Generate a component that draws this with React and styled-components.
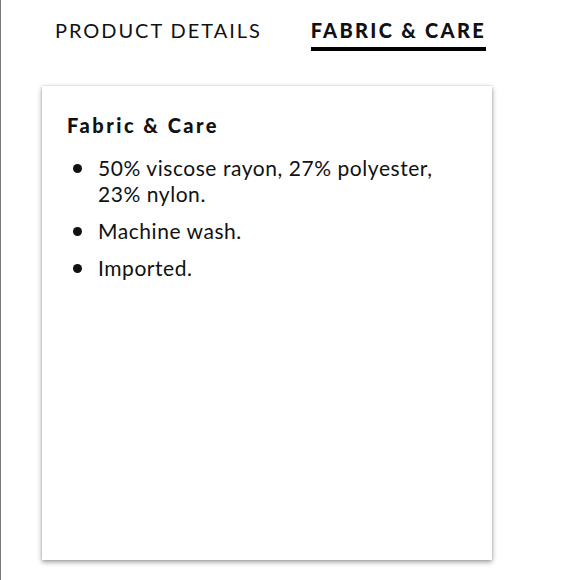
import React from 'react';
import styled, { createGlobalStyle } from 'styled-components';

const GlobalStyle = createGlobalStyle`
    html, body {
        margin: 0;
        padding: 0;
        background: #ffffff;
    }
    body {
        font-family: Lato, 'Open Sans', sans-serif;
        color: #111111;
    }
`;

const Page = styled.div`
    width: 580px;
    height: 580px;
    box-sizing: border-box;
    border-left: 1px solid #7a7a7a;
    overflow: hidden;
`;

const TabBar = styled.div`
    display: flex;
    align-items: flex-start;
    gap: 49px;
    padding: 17px 0 0 54px;
    height: 70px;
    box-sizing: border-box;
`;

const Tab = styled.div`
    font-size: 20px;
    line-height: 26px;
    letter-spacing: ${(props) => (props.active ? '2.3px' : '1.95px')};
    font-weight: ${(props) => (props.active ? 900 : 400)};
    color: #111111;
    padding-bottom: 4px;
    border-bottom: 4px solid ${(props) => (props.active ? '#000000' : 'transparent')};
    white-space: nowrap;
`;

const Card = styled.div`
    margin: 16px 0 0 41px;
    width: 450px;
    height: 474px;
    box-sizing: border-box;
    background: #ffffff;
    box-shadow: 0 2px 5px rgba(0, 0, 0, 0.4), 0 0 2px rgba(0, 0, 0, 0.12);
    padding: 26px 30px 0 25px;
`;

const Heading = styled.h3`
    margin: 0;
    font-size: 20px;
    line-height: 26px;
    font-weight: 900;
    letter-spacing: 2.5px;
`;

const List = styled.ul`
    list-style: none;
    margin: 17px 0 0;
    padding: 0;
    display: flex;
    flex-direction: column;
    gap: 11px;
`;

const Item = styled.li`
    position: relative;
    padding-left: 31px;
    font-size: 21px;
    line-height: 26px;
    letter-spacing: 0.55px;

    &::before {
        content: '';
        position: absolute;
        left: 6px;
        top: 9px;
        width: 9px;
        height: 9px;
        border-radius: 50%;
        background: #111111;
    }
`;

const items = ['50% viscose rayon, 27% polyester, 23% nylon.', 'Machine wash.', 'Imported.'];

function App() {
    return (
        <Page>
            <GlobalStyle />
            <TabBar>
                <Tab>PRODUCT DETAILS</Tab>
                <Tab active>FABRIC &amp; CARE</Tab>
            </TabBar>
            <Card>
                <Heading>Fabric &amp; Care</Heading>
                <List>
                    {items.map((text) => (
                        <Item key={text}>{text}</Item>
                    ))}
                </List>
            </Card>
        </Page>
    );
}

export default App;
